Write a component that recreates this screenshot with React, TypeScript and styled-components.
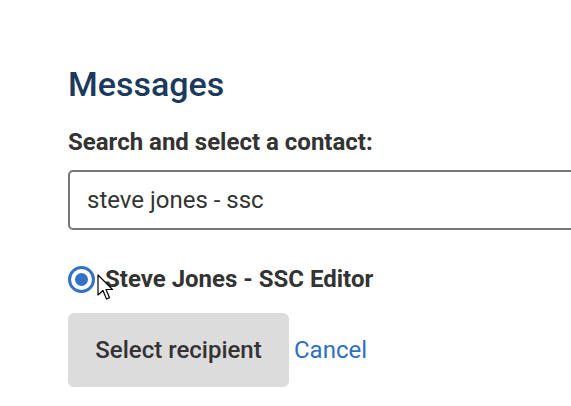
import React, { useState } from 'react'
import styled, { createGlobalStyle } from 'styled-components'

const GlobalStyle = createGlobalStyle`
  html, body {
    margin: 0;
    padding: 0;
    background: #ffffff;
    overflow: hidden;
  }
  body {
    font-family: Roboto, "Liberation Sans", Arial, sans-serif;
  }
`

const Page = styled.div`
  display: flex;
  flex-direction: column;
  padding: 64px 0 0 68px;
  width: 571px;
  height: 406px;
  box-sizing: border-box;
  overflow: hidden;
`

const Heading = styled.h1`
  margin: 0;
  font-size: 34px;
  font-weight: 500;
  line-height: 40px;
  color: #1b3a5c;
`

const Label = styled.label`
  margin-top: 24px;
  font-size: 24px;
  font-weight: 700;
  line-height: 28px;
  color: #333333;
`

const SearchInput = styled.input`
  flex-shrink: 0;
  margin-top: 14px;
  width: 540px;
  height: 60px;
  box-sizing: border-box;
  border: 2px solid #767676;
  border-radius: 5px;
  padding: 0 17px;
  font-family: inherit;
  font-size: 24px;
  color: #333333;
  outline: none;
`

const RadioRow = styled.label`
  display: flex;
  align-items: center;
  gap: 10px;
  height: 32px;
  margin-top: 33px;
  font-size: 24px;
  font-weight: 700;
  color: #333333;
  cursor: pointer;
`

const RadioDot = styled.span<{ $checked: boolean }>`
  display: inline-flex;
  flex-shrink: 0;
  width: 27px;
  height: 27px;
  box-sizing: border-box;
  border: 3px solid #3371c4;
  border-radius: 50%;
  align-items: center;
  justify-content: center;
  &::after {
    content: '';
    width: 13px;
    height: 13px;
    border-radius: 50%;
    background: ${({ $checked }) => ($checked ? '#3371c4' : 'transparent')};
  }
`

const Actions = styled.div`
  display: flex;
  align-items: center;
  gap: 5px;
  margin-top: 18px;
`

const PrimaryButton = styled.button`
  flex-shrink: 0;
  width: 221px;
  height: 74px;
  border: 0;
  border-radius: 6px;
  background: #dcdcdc;
  font-family: inherit;
  font-size: 24px;
  font-weight: 500;
  color: #333333;
  cursor: pointer;
`

const CancelLink = styled.a`
  font-size: 24px;
  color: #2f6fc0;
  text-decoration: none;
  cursor: pointer;
`

const Cursor = styled.svg`
  position: absolute;
  left: 97px;
  top: 274px;
  pointer-events: none;
`

const App = () => {
  const [query, setQuery] = useState<string>('steve jones - ssc')
  const [checked, setChecked] = useState<boolean>(true)

  return (
    <>
      <GlobalStyle />
      <Page>
        <Heading>Messages</Heading>
        <Label htmlFor="contact">Search and select a contact:</Label>
        <SearchInput
          id="contact"
          value={query}
          onChange={(e) => setQuery(e.target.value)}
        />
        <RadioRow onClick={() => setChecked(true)}>
          <RadioDot $checked={checked} />
          Steve Jones - SSC Editor
        </RadioRow>
        <Actions>
          <PrimaryButton>Select recipient</PrimaryButton>
          <CancelLink>Cancel</CancelLink>
        </Actions>
      </Page>
      <Cursor width="20" height="28" viewBox="0 0 20 28">
        <path
          d="M1 1 L1 21 L6 16.5 L9.5 25 L12.5 23.7 L9 15.5 L15.5 15.5 Z"
          fill="#ffffff"
          stroke="#000000"
          strokeWidth="1.2"
          strokeLinejoin="round"
        />
      </Cursor>
    </>
  )
}

export default App
